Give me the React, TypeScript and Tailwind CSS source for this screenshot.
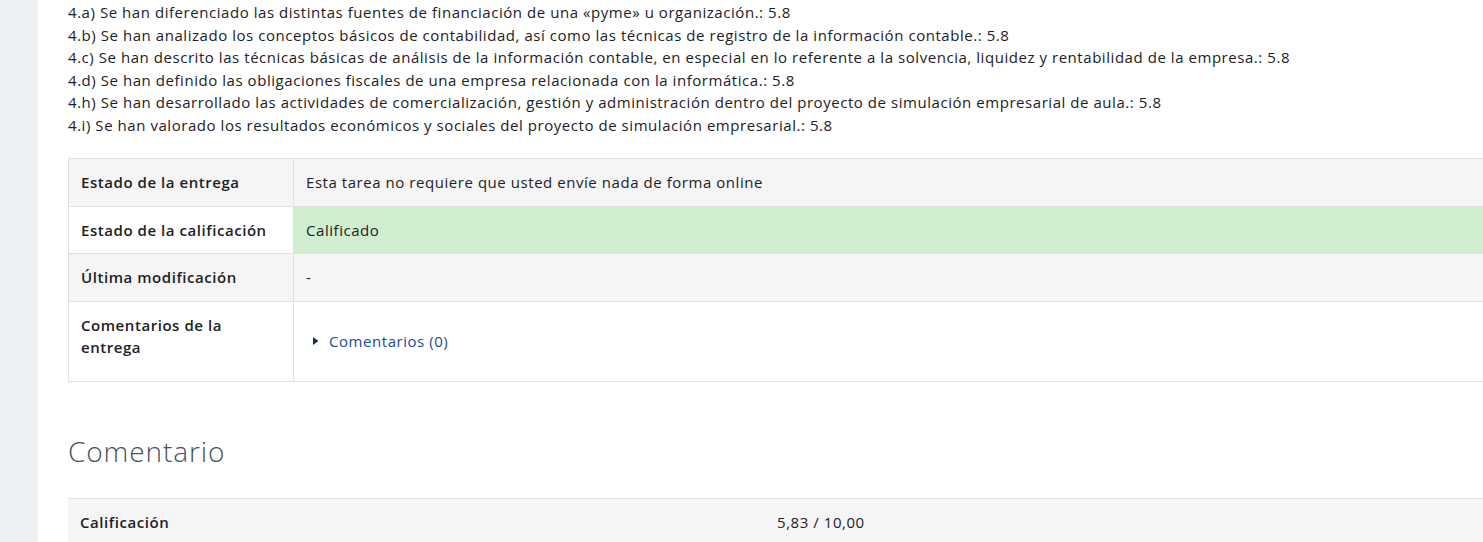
import { Fragment } from "react";

type Row = {
  label: React.ReactNode;
  value: React.ReactNode;
  striped: boolean;
  green?: boolean;
};

const criterios = [
  "4.a) Se han diferenciado las distintas fuentes de financiación de una «pyme» u organización.: 5.8",
  "4.b) Se han analizado los conceptos básicos de contabilidad, así como las técnicas de registro de la información contable.: 5.8",
  "4.c) Se han descrito las técnicas básicas de análisis de la información contable, en especial en lo referente a la solvencia, liquidez y rentabilidad de la empresa.: 5.8",
  "4.d) Se han definido las obligaciones fiscales de una empresa relacionada con la informática.: 5.8",
  "4.h) Se han desarrollado las actividades de comercialización, gestión y administración dentro del proyecto de simulación empresarial de aula.: 5.8",
  "4.i) Se han valorado los resultados económicos y sociales del proyecto de simulación empresarial.: 5.8",
];

function CommentsLink() {
  return (
    <div className="flex items-center min-h-[55px]">
      <a href="#" className="flex items-center gap-[9px] text-[#1c4a96]">
        <svg width="8" height="10" viewBox="0 0 8 10" className="ml-[6px]">
          <path d="M1 1 L6.5 5 L1 9 Z" fill="#172f5c" />
        </svg>
        Comentarios (0)
      </a>
    </div>
  );
}

const rows: Row[] = [
  {
    label: "Estado de la entrega",
    value: "Esta tarea no requiere que usted envíe nada de forma online",
    striped: true,
  },
  { label: "Estado de la calificación", value: "Calificado", striped: false, green: true },
  { label: "Última modificación", value: "-", striped: true },
  {
    label: (
      <>
        Comentarios de la
        <br />
        entrega
      </>
    ),
    value: <CommentsLink />,
    striped: false,
  },
];

export default function App() {
  return (
    <div
      className="flex min-h-[542px] bg-white text-[#1d2125] text-[15px] leading-[22.5px] tracking-[0.55px]"
      style={{ fontFamily: "'Open Sans', 'Liberation Sans', sans-serif" }}
    >
      <div className="w-[38px] shrink-0 bg-[#eef1f4]" />
      <main className="flex-1 overflow-hidden pl-[30px] pt-[1px]">
        <div>
          {criterios.map((c) => (
            <div key={c} className="whitespace-nowrap">
              {c}
            </div>
          ))}
        </div>

        <table className="mt-[22px] w-[1440px] border-collapse border border-[#dee2e6]">
          <tbody>
            {rows.map((r, i) => (
              <Fragment key={i}>
                <tr className={r.striped ? "bg-[#f5f5f5]" : "bg-white"}>
                  <th className="w-[225px] border border-[#dee2e6] px-3 py-3 text-left align-top font-semibold">
                    {r.label}
                  </th>
                  <td className={`border border-[#dee2e6] px-3 py-3 ${r.green ? "bg-[#cfeed0]" : ""}`}>
                    {r.value}
                  </td>
                </tr>
              </Fragment>
            ))}
          </tbody>
        </table>

        <h3 className="mt-[52px] mb-[30px] text-[28px] leading-[34px] font-light tracking-[0.9px] text-[#46535f]">
          Comentario
        </h3>

        <table className="w-[1440px] border-collapse border-t border-[#dee2e6]">
          <tbody>
            <tr className="bg-[#f5f5f5]">
              <th className="w-[697px] px-3 py-3 text-left font-semibold">Calificación</th>
              <td className="px-3 py-3">5,83 / 10,00</td>
            </tr>
          </tbody>
        </table>
      </main>
    </div>
  );
}
